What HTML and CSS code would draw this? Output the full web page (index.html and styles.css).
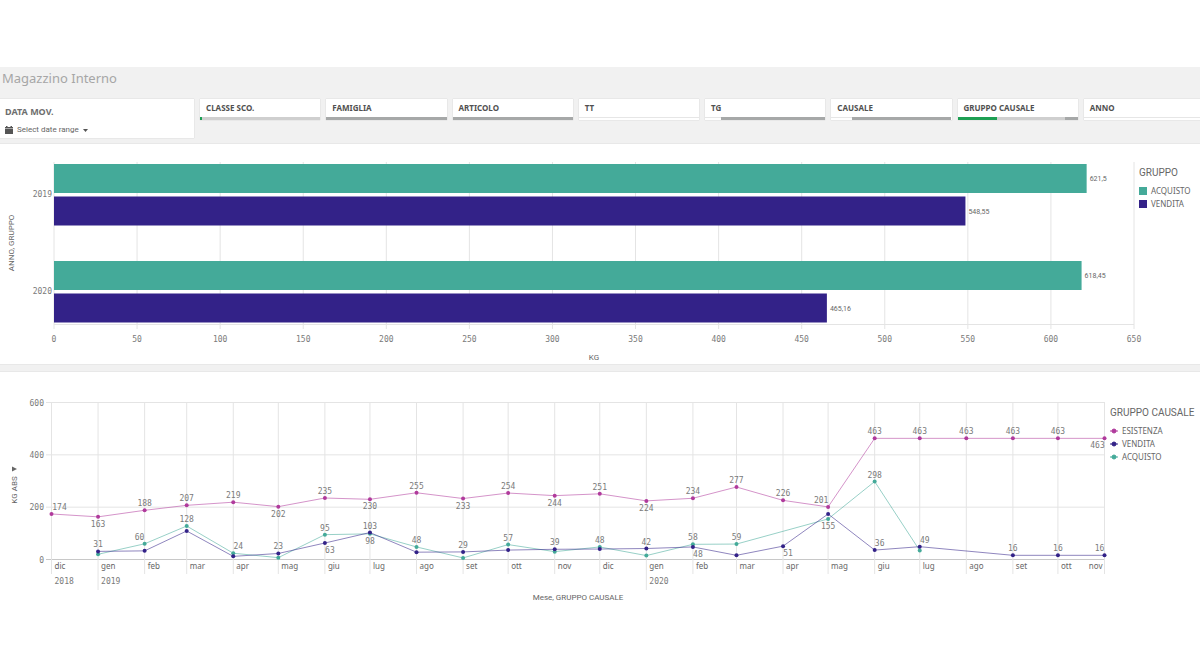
FILE: index.html
```html
<!DOCTYPE html>
<html lang="it">
<head>
    <meta charset="UTF-8">
    <meta name="viewport" content="width=device-width, initial-scale=1.0">
    <title>Magazzino Interno</title>
    <link rel="stylesheet" href="styles.css">
</head>
<body>
    <main class="sheet">
        <h1 class="sheet-title">Magazzino Interno</h1>

        <div class="filters">
            <section class="date-card">
                <h2 class="date-title">DATA MOV.</h2>
                <button class="date-btn" type="button">
                    <svg class="calendar" viewBox="0 0 8 8">
                        <path d="M0 1h1V0h1.5v1h3V0H7v1h1v1.500H0zM0 3h8v5H0z"/>
                    </svg>
                    Select date range
                    <svg class="caret" viewBox="0 0 5 3"><path d="M0 0h5L2.500 3z"/></svg>
                </button>
            </section>

            <div class="filter-list">
                <button class="filter" type="button">
                    <span class="filter-name">CLASSE SCO.</span>
                    <span class="state"><i class="selected" style="width: 2%"></i><i class="alternative" style="width: 98%"></i></span>
                </button>
                <button class="filter" type="button">
                    <span class="filter-name">FAMIGLIA</span>
                    <span class="state"><i class="excluded" style="width: 100%"></i></span>
                </button>
                <button class="filter" type="button">
                    <span class="filter-name">ARTICOLO</span>
                    <span class="state"><i class="excluded" style="width: 100%"></i></span>
                </button>
                <button class="filter" type="button">
                    <span class="filter-name">TT</span>
                    <span class="state"><i class="possible" style="width: 100%"></i></span>
                </button>
                <button class="filter" type="button">
                    <span class="filter-name">TG</span>
                    <span class="state"><i class="possible" style="width: 13%"></i><i class="excluded" style="width: 87%"></i></span>
                </button>
                <button class="filter" type="button">
                    <span class="filter-name">CAUSALE</span>
                    <span class="state"><i class="possible" style="width: 17%"></i><i class="excluded" style="width: 83%"></i></span>
                </button>
                <button class="filter" type="button">
                    <span class="filter-name">GRUPPO CAUSALE</span>
                    <span class="state"><i class="selected" style="width: 33%"></i><i class="alternative" style="width: 56%"></i><i class="excluded" style="width: 11%"></i></span>
                </button>
                <button class="filter" type="button">
                    <span class="filter-name">ANNO</span>
                    <span class="state"><i class="possible" style="width: 100%"></i></span>
                </button>
            </div>
        </div>

        <section class="panel">
            <svg class="chart" id="bar-chart" viewBox="0 0 1135 220"></svg>
            <div class="legend legend-bars">
                <h2 class="legend-title">GRUPPO</h2>
                <ul>
                    <li><span class="swatch acquisto"></span>ACQUISTO</li>
                    <li><span class="swatch vendita"></span>VENDITA</li>
                </ul>
            </div>
        </section>

        <section class="panel">
            <svg class="chart" id="line-chart" viewBox="0 0 1105 232"></svg>
            <div class="legend legend-lines">
                <h2 class="legend-title">GRUPPO CAUSALE</h2>
                <ul>
                    <li><svg class="marker esistenza" viewBox="0 0 8 6"><path d="M0 3h8"/><circle cx="4" cy="3" r="2"/></svg>ESISTENZA</li>
                    <li><svg class="marker vendita" viewBox="0 0 8 6"><path d="M0 3h8"/><circle cx="4" cy="3" r="2"/></svg>VENDITA</li>
                    <li><svg class="marker acquisto" viewBox="0 0 8 6"><path d="M0 3h8"/><circle cx="4" cy="3" r="2"/></svg>ACQUISTO</li>
                </ul>
            </div>
        </section>
    </main>

    <script src="script.js"></script>
</body>
</html>
```

FILE: styles.css
```css
:root {
    --acquisto: #44aa99;
    --vendita: #332288;
    --esistenza: #b03a9c;
    --text-color: #666;
    --grid-color: #e4e4e4;
}

* {
    margin: 0;
    padding: 0;
    box-sizing: border-box;
}

body {
    background: #fff;
    padding: 67px 0;
    overflow-x: hidden;
    color: var(--text-color);
    font-family: 'Noto Sans', sans-serif;
    font-size: 8px;
}

button {
    font: inherit;
    color: inherit;
    border: none;
    background: none;
    text-align: left;
    cursor: pointer;
}

.sheet {
    background: #f1f1f1;
    overflow: hidden;
}

.sheet-title {
    padding: 2px 2px 0;
    font-size: 13px;
    line-height: 18px;
    font-weight: normal;
    color: #a6a6a6;
}

/* Filtri */
.filters {
    display: flex;
    align-items: flex-start;
    gap: 6px;
    margin: 12px -4px 6px 0;
}

.date-card {
    width: 194px;
    padding: 6px 5px 2px;
    background: #fff;
    box-shadow: 0 0 1px #bbb;
}

.date-title {
    font-size: 9px;
    line-height: 14px;
    color: #6e6e6e;
}

.date-btn {
    display: flex;
    align-items: center;
    gap: 4px;
    margin-top: 5px;
    font-family: 'Roboto', sans-serif;
    line-height: 12px;
}

.calendar {
    width: 8px;
    height: 8px;
    fill: #555;
}

.caret {
    width: 5px;
    height: 3px;
    fill: #555;
}

.filter-list {
    flex: 1;
    display: grid;
    grid-template-columns: repeat(8, 1fr);
    gap: 6px;
}

.filter {
    background: #fff;
    box-shadow: 0 0 1px #bbb;
    font-weight: bold;
    color: #505050;
}

.filter-name {
    display: block;
    padding: 3px 6px;
    line-height: 12px;
    white-space: nowrap;
}

.state {
    display: flex;
    height: 3px;
}

.selected {
    background: #1d9f53;
}

.alternative {
    background: #cfcfcf;
}

.excluded {
    background: #a6a8a8;
}

.possible {
    background: #fff;
    border-top: 1px solid #e6e6e6;
}

/* Grafici */
.panel {
    display: flex;
    align-items: flex-start;
    background: #fff;
    box-shadow: 0 0 1px #bbb;
}

.panel + .panel {
    margin-top: 8px;
}

.chart {
    display: block;
    flex: 1;
    min-width: 0;
    overflow: visible;
    font-size: 8px;
    fill: var(--text-color);
}

.chart .grid {
    stroke: var(--grid-color);
}

.chart .axis {
    stroke: #c8c8c8;
}

.chart .number {
    font-family: 'DejaVu Sans Mono', monospace;
    fill: #7a7a7a;
}

.chart .bar-label {
    font-family: 'Roboto', sans-serif;
    font-size: 7px;
}

.chart .axis-title {
    font-family: 'Roboto', sans-serif;
    text-anchor: middle;
}

.chart .middle {
    text-anchor: middle;
}

.chart .end {
    text-anchor: end;
}

.acquisto {
    fill: var(--acquisto);
    stroke: var(--acquisto);
}

.vendita {
    fill: var(--vendita);
    stroke: var(--vendita);
}

.esistenza {
    fill: var(--esistenza);
    stroke: var(--esistenza);
}

.chart .line {
    fill: none;
    opacity: 0.55;
}

.chart .bar,
.chart .dot {
    stroke: none;
}

/* Legende */
.legend {
    white-space: nowrap;
    line-height: 13px;
}

.legend-bars {
    width: 65px;
    padding: 22px 0 0 4px;
}

.legend-lines {
    width: 95px;
    padding: 34px 0 0 5px;
}

.legend-title {
    font-family: 'Roboto', sans-serif;
    font-size: 10px;
    font-weight: normal;
    margin-bottom: 5px;
}

.legend ul {
    list-style: none;
}

.legend li {
    display: flex;
    align-items: center;
    gap: 4px;
}

.swatch {
    width: 8px;
    height: 8px;
}

.swatch.acquisto {
    background: var(--acquisto);
}

.swatch.vendita {
    background: var(--vendita);
}

.marker {
    width: 8px;
    height: 6px;
}
```

FILE: script.js
```js
const NS = 'http://www.w3.org/2000/svg';

function add(parent, tag, attrs, text) {
    const el = document.createElementNS(NS, tag);
    for (const key in attrs) {
        el.setAttribute(key, attrs[key]);
    }
    if (text !== undefined) {
        el.textContent = text;
    }
    parent.appendChild(el);
    return el;
}

// Grafico a barre: KG per anno e gruppo
function drawBars() {
    const svg = document.getElementById('bar-chart');
    const x = v => 54 + v * 1080 / 650;
    const years = [
        {name: '2019', top: 20, acquisto: 621.5, vendita: 548.55},
        {name: '2020', top: 117, acquisto: 618.45, vendita: 465.16}
    ];

    for (let v = 0; v <= 650; v += 50) {
        add(svg, 'line', {class: 'grid', x1: x(v), x2: x(v), y1: 18, y2: 185});
        add(svg, 'text', {class: 'number middle', x: x(v), y: 198}, v);
    }
    add(svg, 'line', {class: 'grid', x1: x(0), x2: x(650), y1: 180.5, y2: 180.5});

    years.forEach(year => {
        add(svg, 'text', {class: 'number end', x: 52, y: year.top + 33}, year.name);
        ['acquisto', 'vendita'].forEach((group, i) => {
            const y = year.top + i * 32.5;
            const value = year[group];
            add(svg, 'rect', {class: 'bar ' + group, x: 54, y: y, width: x(value) - 54, height: 29});
            add(svg, 'text', {class: 'bar-label', x: x(value) + 3, y: y + 17}, String(value).replace('.', ','));
        });
    });

    add(svg, 'text', {class: 'axis-title', x: 594, y: 216}, 'KG');
    add(svg, 'text', {class: 'axis-title', transform: 'translate(14 99) rotate(-90)'}, 'ANNO, GRUPPO');
}

// Grafico a linee: KG ABS per mese
function drawLines() {
    const svg = document.getElementById('line-chart');
    const months = ['dic', 'gen', 'feb', 'mar', 'apr', 'mag', 'giu', 'lug', 'ago', 'set', 'ott', 'nov',
        'dic', 'gen', 'feb', 'mar', 'apr', 'mag', 'giu', 'lug', 'ago', 'set', 'ott', 'nov'];
    const start = Date.UTC(2018, 11, 1);
    const span = Date.UTC(2020, 10, 1) - start;
    const x = i => 51.5 + (Date.UTC(2018, 11 + i, 1) - start) / span * 1053;
    const y = v => 187.5 - v * 157 / 600;

    const series = {
        esistenza: [174, 163, 188, 207, 219, 202, 235, 230, 255, 233, 254, 244,
            251, 224, 234, 277, 226, 201, 463, 463, 463, 463, 463, 463],
        acquisto: [null, 20, 60, 128, 24, 7, 95, 98, 48, 6, 57, 30,
            48, 15, 58, 59, null, 155, 298, 34, null, null, null, null],
        vendita: [null, 31, 33, 109, 12, 23, 63, 103, 28, 29, 36, 39,
            40, 42, 48, 16, 51, 174, 36, 49, null, 16, 16, 16]
    };

    // Etichette: mese, spostamento orizzontale, sotto il punto
    const labels = {
        esistenza: [[0, 8], [1, 0, true], [2, 0], [3, 0], [4, 0], [5, 0, true], [6, 0], [7, 0, true],
            [8, 0], [9, 0, true], [10, 0], [11, 0, true], [12, 0], [13, 0, true], [14, 0], [15, 0],
            [16, 0], [17, -7], [18, 0], [19, 0], [20, 0], [21, 0], [22, 0], [23, -7, true]],
        acquisto: [[2, -5], [3, 0], [4, 5], [6, 0], [7, 0, true], [8, 0], [10, 0], [12, 0],
            [14, 0], [15, 0], [17, 0, true], [18, 0]],
        vendita: [[1, 0], [5, 0], [6, 5, true], [7, 0], [9, 0], [11, 0], [13, 0], [14, 5, true],
            [16, 5, true], [18, 5], [19, 5], [21, 0], [22, 0], [23, -5]]
    };

    [0, 200, 400, 600].forEach(v => {
        add(svg, 'line', {class: v === 0 ? 'axis' : 'grid', x1: 46, x2: 1105, y1: y(v), y2: y(v)});
        add(svg, 'text', {class: 'number end', x: 44, y: y(v) + 3}, v);
    });

    months.forEach((name, i) => {
        const last = i === months.length - 1;
        const newYear = name === 'gen';
        add(svg, 'line', {class: 'grid', x1: x(i), x2: x(i), y1: 30, y2: newYear ? 218 : 202});
        add(svg, 'text', {class: last ? 'end' : '', x: last ? x(i) - 2 : x(i) + 3, y: 197}, name);
    });
    [[0, '2018'], [1, '2019'], [13, '2020']].forEach(([i, year]) => {
        add(svg, 'text', {class: 'number', x: x(i) + 3, y: 212}, year);
    });

    for (const name in series) {
        const points = series[name].map((v, i) => v === null ? null : [x(i), y(v)]);
        add(svg, 'polyline', {class: 'line ' + name, points: points.filter(p => p).join(' ')});
        points.filter(p => p).forEach(p => {
            add(svg, 'circle', {class: 'dot ' + name, cx: p[0], cy: p[1], r: 2});
        });
    }
    for (const name in labels) {
        labels[name].forEach(([i, dx, below]) => {
            const v = series[name][i];
            add(svg, 'text', {class: 'number middle', x: x(i) + dx, y: y(v) + (below ? 10 : -4)}, v);
        });
    }

    add(svg, 'text', {class: 'axis-title', x: 578, y: 228}, 'Mese, GRUPPO CAUSALE');
    add(svg, 'text', {class: 'axis-title', transform: 'translate(17 118) rotate(-90)'}, 'KG ABS');
    add(svg, 'path', {d: 'M12 94.500L17 97L12 99.500z'});
}

drawBars();
drawLines();
```
